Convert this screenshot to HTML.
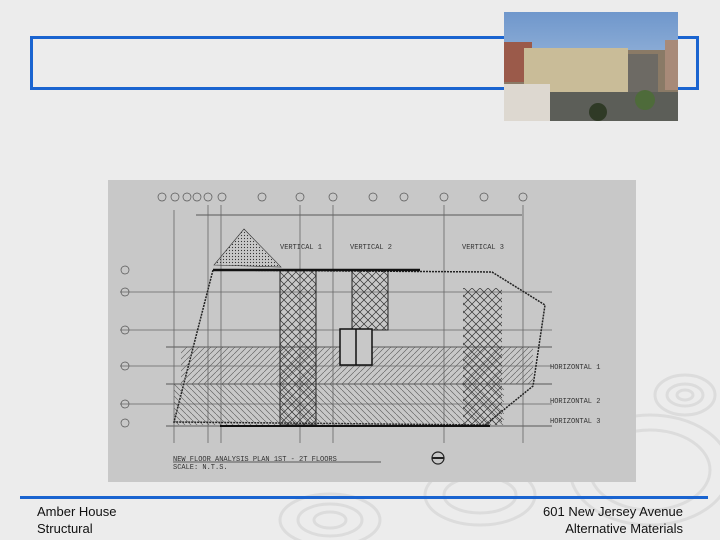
<!DOCTYPE html>
<html><head><style>
body{margin:0;width:720px;height:540px;background:#ececec;position:relative;overflow:hidden;font-family:"Liberation Sans",sans-serif}
.t{position:absolute;font-size:13px;color:#111;line-height:17px}
</style></head><body>
<svg width="720" height="540" style="position:absolute;left:0;top:0">
<defs>
<pattern id="x" width="8" height="8" patternUnits="userSpaceOnUse"><path d="M0 0L8 8M8 0L0 8" stroke="#333" stroke-width="0.7"/></pattern>
<pattern id="d" width="6" height="6" patternUnits="userSpaceOnUse"><path d="M0 6L6 0" stroke="#555" stroke-width="0.6"/></pattern>
<pattern id="d2" width="6" height="6" patternUnits="userSpaceOnUse"><path d="M0 0L6 6" stroke="#555" stroke-width="0.6"/></pattern>
<pattern id="dot" width="3" height="3" patternUnits="userSpaceOnUse"><circle cx="1.5" cy="1.5" r="0.6" fill="#333"/></pattern>
<linearGradient id="sky" x1="0" y1="0" x2="0" y2="1"><stop offset="0" stop-color="#6f97cc"/><stop offset="1" stop-color="#b9cde4"/></linearGradient>
</defs>
<g fill="none" stroke="#dcdcdc" stroke-width="3">
<ellipse cx="330" cy="520" rx="50" ry="26"/><ellipse cx="330" cy="520" rx="32" ry="16"/><ellipse cx="330" cy="520" rx="16" ry="8"/>
<ellipse cx="480" cy="495" rx="55" ry="30"/><ellipse cx="480" cy="495" rx="36" ry="18"/>
<ellipse cx="685" cy="395" rx="30" ry="20"/><ellipse cx="685" cy="395" rx="18" ry="11"/><ellipse cx="685" cy="395" rx="8" ry="5"/>
<ellipse cx="650" cy="470" rx="60" ry="40"/><ellipse cx="650" cy="470" rx="80" ry="55"/>
</g>
<rect x="31.5" y="37.5" width="666" height="51" fill="none" stroke="#1a64d0" stroke-width="3"/>
<rect x="504" y="12" width="174" height="109" fill="url(#sky)"/>
<rect x="504" y="50" width="174" height="71" fill="#8a7a66"/>
<rect x="504" y="42" width="28" height="40" fill="#9b5a4a"/>
<rect x="524" y="48" width="104" height="45" fill="#c9bc98"/>
<rect x="628" y="54" width="30" height="50" fill="#6d6a64"/>
<rect x="665" y="40" width="13" height="50" fill="#a88a78"/>
<rect x="504" y="84" width="46" height="37" fill="#ddd8d0"/>
<rect x="550" y="92" width="128" height="29" fill="#5c5e58"/>
<circle cx="645" cy="100" r="10" fill="#4e6b3a"/><circle cx="598" cy="112" r="9" fill="#2f3a26"/>
<rect x="108" y="180" width="528" height="302" fill="#c8c8c8"/>
<g stroke="#666" stroke-width="0.8">
<line x1="196" y1="215" x2="522" y2="215" stroke="#333"/>
<line x1="120" y1="292" x2="552" y2="292"/><line x1="120" y1="330" x2="552" y2="330"/>
<line x1="120" y1="366" x2="552" y2="366"/><line x1="120" y1="404" x2="552" y2="404"/>
<line x1="166" y1="347" x2="552" y2="347" stroke="#333"/><line x1="166" y1="384" x2="552" y2="384" stroke="#333"/>
<line x1="166" y1="426" x2="552" y2="426" stroke="#333"/>
<line x1="174" y1="210" x2="174" y2="443"/><line x1="208" y1="205" x2="208" y2="443"/><line x1="221" y1="205" x2="221" y2="443"/>
<line x1="300" y1="205" x2="300" y2="443"/><line x1="333" y1="205" x2="333" y2="443"/><line x1="444" y1="205" x2="444" y2="443"/><line x1="523" y1="205" x2="523" y2="443"/>
</g>
<polygon points="213,270 492,272 545,305 533,386 485,425 174,422" fill="none" stroke="#222" stroke-width="1.5" stroke-dasharray="2,1"/>
<rect x="181" y="347" width="352" height="37" fill="url(#d)"/>
<rect x="174" y="384" width="330" height="41" fill="url(#d2)"/>
<rect x="280" y="270" width="36" height="155" fill="url(#x)" stroke="#222"/>
<rect x="352" y="270" width="36" height="60" fill="url(#x)" stroke="#222"/>
<rect x="463" y="288" width="39" height="137" fill="url(#x)"/>
<polygon points="244,229 214,265 281,267" fill="url(#dot)" stroke="#333" stroke-width="0.6"/>
<line x1="213" y1="270" x2="420" y2="270" stroke="#111" stroke-width="2.5"/>
<line x1="220" y1="426" x2="490" y2="426" stroke="#111" stroke-width="2"/>
<rect x="340" y="329" width="32" height="36" fill="#c8c8c8" stroke="#111" stroke-width="1.5"/>
<line x1="356" y1="329" x2="356" y2="365" stroke="#111" stroke-width="1.5"/>
<g font-family="Liberation Mono,monospace" font-size="7" fill="#333">
<text x="280" y="249">VERTICAL 1</text><text x="350" y="249">VERTICAL 2</text><text x="462" y="249">VERTICAL 3</text>
<text x="550" y="369">HORIZONTAL 1</text><text x="550" y="403">HORIZONTAL 2</text><text x="550" y="423">HORIZONTAL 3</text>
<text x="173" y="461">NEW FLOOR ANALYSIS PLAN 1ST - 2T FLOORS</text><text x="173" y="469">SCALE: N.T.S.</text>
</g>
<line x1="173" y1="462" x2="381" y2="462" stroke="#333" stroke-width="0.8"/>
<circle cx="438" cy="458" r="6" fill="none" stroke="#222" stroke-width="1.2"/><line x1="432" y1="458" x2="444" y2="458" stroke="#222" stroke-width="2"/>
<g fill="none" stroke="#555" stroke-width="0.7">
<circle cx="162" cy="197" r="4"/><circle cx="175" cy="197" r="4"/><circle cx="187" cy="197" r="4"/><circle cx="197" cy="197" r="4"/><circle cx="208" cy="197" r="4"/><circle cx="222" cy="197" r="4"/><circle cx="262" cy="197" r="4"/><circle cx="300" cy="197" r="4"/><circle cx="333" cy="197" r="4"/><circle cx="373" cy="197" r="4"/><circle cx="404" cy="197" r="4"/><circle cx="444" cy="197" r="4"/><circle cx="484" cy="197" r="4"/><circle cx="523" cy="197" r="4"/>
<circle cx="125" cy="270" r="4"/><circle cx="125" cy="292" r="4"/><circle cx="125" cy="330" r="4"/><circle cx="125" cy="366" r="4"/><circle cx="125" cy="404" r="4"/><circle cx="125" cy="423" r="4"/>
</g>
<line x1="20" y1="497.5" x2="708" y2="497.5" stroke="#1a64d0" stroke-width="3"/>
</svg>
<div class="t" style="left:37px;top:503px">Amber House<br>Structural</div>
<div class="t" style="right:37px;top:503px;text-align:right">601 New Jersey Avenue<br>Alternative Materials</div>
</body></html>
